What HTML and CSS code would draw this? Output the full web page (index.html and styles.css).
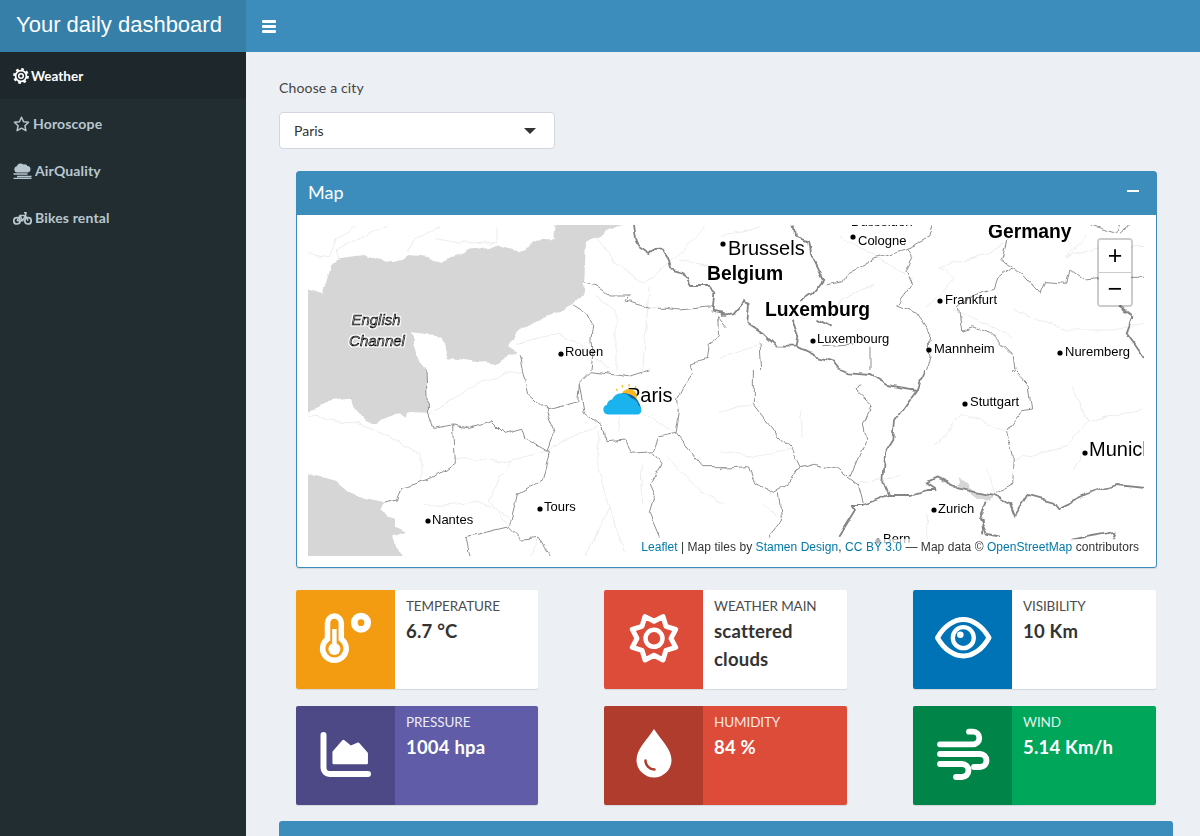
FILE: index.html
```html
<!DOCTYPE html>
<html lang="en">

<head>
    <meta charset="UTF-8">
    <meta name="viewport" content="width=device-width, initial-scale=1.0">
    <title>Your daily dashboard</title>
    <link rel="stylesheet" href="styles.css">
</head>

<body>
    <header class="topbar">
        <div class="logo">Your daily dashboard</div>
        <div class="navbar">
            <span class="burger"><i></i><i></i><i></i></span>
        </div>
    </header>

    <div class="page">
        <aside class="sidebar">
            <a class="nav-item active">
                <svg class="nav-icon" viewBox="0 0 16 16">
                    <circle class="line" cx="8" cy="8" r="5.4" stroke-width="1.8" />
                    <circle class="teeth" cx="8" cy="8" r="6.8" stroke-width="2.2" stroke-dasharray="2.7 2.64" />
                    <circle class="line" cx="8" cy="8" r="2.3" stroke-width="1.5" />
                </svg>
                Weather
            </a>
            <a class="nav-item">
                <svg class="nav-icon wide" viewBox="0 0 17 16">
                    <polygon class="line" stroke-width="1.5" stroke-linejoin="round"
                        points="8.5,1.2 10.6,5.7 15.6,6.3 11.9,9.7 12.9,14.7 8.5,12.2 4.1,14.7 5.1,9.7 1.4,6.3 6.4,5.7" />
                </svg>
                Horoscope
            </a>
            <a class="nav-item">
                <svg class="nav-icon wider" viewBox="0 0 19 16">
                    <path class="solid" d="M4 9.5a3.2 3.2 0 0 1-.2-6.3 4 4 0 0 1 6.6-1.6 3 3 0 0 1 4 1.4 3.3 3.3 0 0 1 .6 6.5z" />
                    <path class="line" stroke-width="1.3" d="M0.5 11h14M4 13.5h14.5M0.5 15.5h18" />
                </svg>
                AirQuality
            </a>
            <a class="nav-item">
                <svg class="nav-icon wider" viewBox="0 0 19 16">
                    <circle class="line" cx="4" cy="10.8" r="3.2" stroke-width="1.7" />
                    <circle class="line" cx="15" cy="10.8" r="3.2" stroke-width="1.7" />
                    <path class="line" stroke-width="1.5" d="M4 10.8 7 5.5h5.5L15 10.8M7 5.5l2.5 5.3h-5.500M12.500 5.500l-3 5.300M11 2.800h2l-.5 2.700" />
                </svg>
                Bikes rental
            </a>
        </aside>

        <main class="content">
            <label class="field-label">Choose a city</label>
            <div class="select">
                <span>Paris</span>
                <span class="caret"></span>
            </div>

            <div class="inner">
                <section class="box">
                    <div class="box-header">
                        <h3>Map</h3>
                        <span class="collapse"></span>
                    </div>
                    <div class="box-body">
                        <div class="map">
                            <svg class="tiles" viewBox="308 225 836 331">
                                <defs>
                                    <filter id="rough" x="0" y="0" width="100%" height="100%" color-interpolation-filters="sRGB">
                                        <feTurbulence type="fractalNoise" baseFrequency="0.07" numOctaves="2" seed="4" />
                                        <feDisplacementMap in="SourceGraphic" scale="7" xChannelSelector="R" yChannelSelector="G" />
                                    </filter>
                                    <filter id="halo" x="-10%" y="-20%" width="120%" height="140%">
                                        <feMorphology in="SourceAlpha" operator="dilate" radius="1" />
                                        <feComponentTransfer result="edge">
                                            <feFuncR type="linear" slope="0" intercept="1" />
                                            <feFuncG type="linear" slope="0" intercept="1" />
                                            <feFuncB type="linear" slope="0" intercept="1" />
                                        </feComponentTransfer>
                                        <feMerge>
                                            <feMergeNode in="edge" />
                                            <feMergeNode in="SourceGraphic" />
                                        </feMerge>
                                    </filter>
                                </defs>

                                <g filter="url(#rough)">
                                    <g transform="translate(296 170) scale(.3333)">
                                        <path class="sea" d="M780,150 L1005,150 L930,185 L870,215 L865,330 L860,370 L830,405 L780,430 L720,455 L660,490 L640,530 L665,545 L600,585 L540,575 L470,565 L455,570 L440,500 L345,490 L385,610 L20,610 L20,350 L80,370 L105,290 L130,265 L200,255 L260,275 L320,270 L340,255 L400,262 L440,282 L470,260 L510,248 L530,235 L600,225 L665,245 L700,225 L740,205 L775,205 Z" />
                                        <path class="minor" d="M36,250 L100,260 L120,210 L180,170 M130,270 L120,240 L230,180 L280,170 M340,250 L350,215 L430,170 M415,205 L490,220 L600,215 L600,170 M900,200 L960,280 L1050,340 L1140,260 L1230,170 M1060,350 L1040,600 M900,380 L960,420 L960,600 M660,520 L790,490 L860,530 L940,600 M1150,270 L1250,290" />
                                        <path class="region" d="M865,335 L900,345 L940,375 L1000,375 L990,390 L1040,405 L1060,415 L1110,415 L1150,420 L1250,410 M835,408 L870,430 L890,470 L885,510 L890,560 L885,600 M670,550 L680,600 M1290,470 L1265,440 L1268,500 L1240,520 L1235,565 L1180,580 L1185,600" />
                                        <path class="border" d="M1010,160 L1018,205 L1030,235 L1060,255 L1075,240 L1100,238 L1115,260 L1125,295 L1160,305 L1185,345 L1235,345 L1255,365 L1250,425 L1290,435" />
                                    </g>
                                    <g transform="translate(720 170) scale(.3333)">
                                        <path class="minor" d="M0,200 L120,170 M360,200 L470,260 L580,330 M660,290 L800,250 L860,215 M620,410 L700,330 L660,290 M880,170 L860,215 M1040,260 L1140,230 L1270,230 M880,420 L1040,480 L1180,480 L1270,460 M470,340 L360,390 L330,450 M0,560 L130,520 M700,420 L880,500 M1100,200 L1040,260" />
                                        <path class="region" d="M640,160 L630,200 L585,225 L560,235 L575,260 L555,300 L575,345 L530,405 L590,430 L630,490 L625,525 L630,560 L620,600 M315,345 L370,335 L380,310 L460,265 L560,235 M860,215 L845,265 L875,290 L910,315 L960,370 L975,335 L1040,340 L1050,300 L1090,330 L1150,325 L1290,325 M875,290 L830,325 L820,355 L760,375 L715,410 L725,480 L760,470 L810,490 L850,530 L880,560 L885,600 M1115,165 L1190,190 L1200,160 M1200,190 L1235,160 M120,520 L125,600 M450,530 L450,600 M310,530 L400,525" />
                                        <path class="border" d="M220,160 L225,200 L265,215 L270,250 L290,290 L310,330 L280,370 L240,395 M0,435 L40,430 L75,390 L90,400 L85,460 L130,490 L170,530 L230,530 L290,560 L340,575 L360,600 M215,445 L235,500 L230,530 M290,445 L335,470 M1200,410 L1240,440 L1220,490 L1290,590" />
                                    </g>
                                    <g transform="translate(296 370) scale(.3333)">
                                        <path class="sea" d="M20,-5 L390,-5 L395,130 L420,130 L330,125 L325,145 L310,130 L230,160 L200,145 L160,85 L100,95 L60,115 L20,130 Z" />
                                        <path class="sea" d="M20,305 L60,320 L120,335 L155,365 L210,385 L260,395 L250,425 L300,440 L300,470 L330,485 L290,500 L300,530 L330,570 L20,570 Z" />
                                        <path class="minor" d="M36,135 L200,165 L300,210 L375,255 L375,340 M470,265 L640,275 L750,240 L900,170 M640,275 L580,390 L640,470 M380,410 L560,395 L640,440 M910,180 L905,290 L940,420 L990,550 M1040,130 L1140,190 M970,140 L965,190 M1110,260 L1220,370 L1290,400 M680,0 L560,30 L500,70 L395,130 M730,505 L700,557 M940,415 L870,557 M1035,280 L1040,400" />
                                        <path class="region" d="M390,0 L395,130 L415,175 L470,165 L475,280 L420,320 L320,355 L305,390 L260,400 M470,165 L520,175 L590,155 L625,190 L680,175 L690,205 L750,240 L760,240 L750,290 L740,330 L665,370 L640,470 L510,500 L525,570 M680,0 L695,70 L750,120 L845,95 L850,40 L885,5 L1000,20 L1060,0 M750,120 L775,180 L750,240 M850,40 L865,130 L925,180 L930,215 L990,210 L1005,250 L1070,245 L1090,200 L1140,190 L1150,130 L1145,90 L1170,40 L1190,10 M1070,245 L1095,280 L1060,345 L1075,380 L1060,430 L1090,500 M1140,190 L1220,290 L1290,290 M640,470 L680,510 L730,505 L770,570" />
                                    </g>
                                    <g transform="translate(720 370) scale(.3333)">
                                        <path class="sea" d="M715,320 L760,360 L820,375 L810,395 L770,380 L735,355 L705,355 L720,335 Z" />
                                        <path class="minor" d="M0,240 L100,260 L215,240 M240,120 L250,200 M650,230 L720,130 L800,160 L860,185 M880,270 L1040,230 L1100,150 L1060,50 M1100,150 L1270,120 M1060,300 L1090,240 M820,370 L800,300 M420,340 L540,320 M130,400 L180,450 M620,430 L620,510 M0,130 L100,100" />
                                        <path class="region" d="M100,0 L100,100 L170,190 L215,240 L240,290 L210,340 L160,370 L105,340 L85,290 L0,295 M240,290 L280,280 L350,295 L415,345 L430,400 M420,40 L405,60 L455,105 L430,165 L440,205 L390,320 M880,0 L925,50 L935,120 L905,125 L860,185 L880,260 L875,345 L825,370 M175,370 L185,450 L150,500" />
                                        <path class="border" d="M360,0 L385,10 L450,15 L500,45 L590,60 L560,100 L525,150 L520,210 L495,250 L490,340 L505,375 L430,405 L395,405 L405,420 L355,500 M610,0 L590,60 M505,375 L570,375 L620,360 L650,360 L620,340 L650,325 L700,350 L820,375 L870,400 L885,440 L925,375 L1000,395 L1015,415 L1100,375 L1190,345 L1290,355 M800,395 L780,450 L800,490 L840,500 M785,450 L790,490 M1050,510 L1190,485 L1180,510" />
                                    </g>
                                </g>

                                <g class="dots">
                                    <circle cx="723" cy="244" r="2.6" />
                                    <circle cx="853" cy="237" r="2.6" />
                                    <circle cx="940" cy="301" r="2.6" />
                                    <circle cx="813" cy="341" r="2.6" />
                                    <circle cx="929" cy="350" r="2.6" />
                                    <circle cx="1060" cy="353" r="2.6" />
                                    <circle cx="561" cy="354" r="2.6" />
                                    <circle cx="965" cy="404" r="2.6" />
                                    <circle cx="1085" cy="453" r="2.6" />
                                    <circle cx="934" cy="510" r="2.6" />
                                    <circle cx="540" cy="509" r="2.6" />
                                    <circle cx="428" cy="521" r="2.6" />
                                    <circle cx="878" cy="541" r="2.6" />
                                </g>
                                <g class="labels">
                                    <text class="big" x="728" y="255">Brussels</text>
                                    <text class="country" x="707" y="280">Belgium</text>
                                    <text class="country" x="765" y="316">Luxemburg</text>
                                    <text class="country" x="988" y="238">Germany</text>
                                    <text x="851" y="226">Düsseldorf</text>
                                    <text x="858" y="245">Cologne</text>
                                    <text x="945" y="304">Frankfurt</text>
                                    <text x="817" y="343">Luxembourg</text>
                                    <text x="934" y="353">Mannheim</text>
                                    <text x="1065" y="356">Nuremberg</text>
                                    <text x="565" y="356">Rouen</text>
                                    <text x="970" y="406">Stuttgart</text>
                                    <text class="big" x="1089" y="456">Munich</text>
                                    <text x="938" y="513">Zurich</text>
                                    <text x="883" y="543">Bern</text>
                                    <text x="544" y="511">Tours</text>
                                    <text x="432" y="524">Nantes</text>
                                    <text class="big" x="627" y="402">Paris</text>
                                    <text class="water" filter="url(#halo)" x="376" y="325">English</text>
                                    <text class="water" filter="url(#halo)" x="377" y="346">Channel</text>
                                </g>

                                <!-- weather marker -->
                                <g>
                                    <path class="ray" d="M616 389l1.500 1.500M622 385l.8 2.500M629 384v2.500M636 386l-1 2" />
                                    <circle cx="629" cy="397" r="8" fill="#fbb91f" />
                                    <path d="M622 393q15 0 19 15L630 401z" fill="#12679f" />
                                    <path d="M608 414.500A5 5 0 0 1 607 404.700 6 6 0 0 1 612 399.500 11 11 0 0 1 631 398Q638 400 638.500 405.500A4.800 4.800 0 0 1 638 414.500z" fill="#1ab3ee" />
                                </g>
                            </svg>

                            <div class="zoom-ctrl">
                                <span>+</span>
                                <span>−</span>
                            </div>
                            <div class="attribution">
                                <a>Leaflet</a> | Map tiles by <a>Stamen Design</a>, <a>CC BY 3.0</a> — Map data © <a>OpenStreetMap</a> contributors
                            </div>
                        </div>
                    </div>
                </section>

                <div class="info-grid">
                    <div class="info-box">
                        <div class="info-icon orange">
                            <svg viewBox="0 0 99 99">
                                <path class="stroke" stroke-width="5.500" d="M31.500 49V33a6.900 6.900 0 0 1 13.800 0V49a11.800 11.800 0 1 1-13.800 0z" />
                                <circle class="fill" cx="38.400" cy="59" r="6" />
                                <path class="stroke" stroke-width="4.500" d="M38.400 39V58" />
                                <circle class="stroke" cx="65" cy="32.700" r="6.700" stroke-width="6.700" />
                            </svg>
                        </div>
                        <div class="info-text">
                            <span class="info-label">TEMPERATURE</span>
                            <span class="info-value">6.7 °C</span>
                        </div>
                    </div>
                    <div class="info-box">
                        <div class="info-icon red">
                            <svg viewBox="0 0 99 99">
                                <polygon class="stroke" stroke-width="5" stroke-linejoin="round" transform="translate(50 48.300)"
                                    points="0,-17 9,-21.700 12,-12 21.700,-9 17,0 21.700,9 12,12 9,21.700 0,17 -9,21.700 -12,12 -21.700,9 -17,0 -21.700,-9 -12,-12 -9,-21.700" />
                                <circle class="stroke" cx="50" cy="48.300" r="8.500" stroke-width="4.500" />
                            </svg>
                        </div>
                        <div class="info-text">
                            <span class="info-label">WEATHER MAIN</span>
                            <span class="info-value">scattered clouds</span>
                        </div>
                    </div>
                    <div class="info-box">
                        <div class="info-icon blue">
                            <svg viewBox="0 0 99 99">
                                <path class="stroke" stroke-width="5" stroke-linejoin="round" d="M24.500 47.700C31 36 41 29.500 50.300 29.500S69.500 36 76 47.700C69.500 59.500 59.500 66 50.300 66S31 59.500 24.500 47.700z" />
                                <circle class="stroke" cx="50.300" cy="47.700" r="10.500" stroke-width="4.300" />
                                <circle class="fill" cx="47.300" cy="44.700" r="3.300" />
                            </svg>
                        </div>
                        <div class="info-text">
                            <span class="info-label">VISIBILITY</span>
                            <span class="info-value">10 Km</span>
                        </div>
                    </div>
                    <div class="info-box purple">
                        <div class="info-icon">
                            <svg viewBox="0 0 99 99">
                                <path class="stroke" stroke-width="6" stroke-linecap="round" d="M27.500 29V62a6 6 0 0 0 6 6H72" />
                                <path class="fill solid-join" d="M37.700 57V46L47.300 35 54.700 41 62.300 37.700 70.700 47.300V57z" />
                            </svg>
                        </div>
                        <div class="info-text">
                            <span class="info-label">PRESSURE</span>
                            <span class="info-value">1004 hpa</span>
                        </div>
                    </div>
                    <div class="info-box coral">
                        <div class="info-icon">
                            <svg viewBox="0 0 99 99">
                                <path class="fill" d="M50 23C57 34 67.500 43 67.500 54a17.500 17.500 0 0 1-35 0C32.500 43 43 34 50 23z" />
                                <path class="glint" d="M41.500 54.500c0 5 4 9 9 9" />
                            </svg>
                        </div>
                        <div class="info-text">
                            <span class="info-label">HUMIDITY</span>
                            <span class="info-value">84 %</span>
                        </div>
                    </div>
                    <div class="info-box green">
                        <div class="info-icon">
                            <svg viewBox="0 0 99 99">
                                <path class="stroke" stroke-width="5.800" stroke-linecap="round" d="M27 38.300H60a6.300 6.300 0 0 0 0-12.600h-4M27 48H67a6.500 6.500 0 0 1 0 13h-6M27 58H49a6.500 6.500 0 0 1 0 13h-6" />
                            </svg>
                        </div>
                        <div class="info-text">
                            <span class="info-label">WIND</span>
                            <span class="info-value">5.14 Km/h</span>
                        </div>
                    </div>
                </div>
            </div>

            <section class="box-next">
                <h3>Weather forecast</h3>
            </section>
        </main>
    </div>
</body>

</html>
```

FILE: styles.css
```css
html,
body {
    height: 100%;
}

body {
    margin: 0;
    overflow: hidden;
    background-color: #ecf0f5;
    color: #333;
    font-family: Lato, "Noto Sans", sans-serif;
    font-size: 14px;
}

.topbar {
    display: flex;
    height: 52px;
}

.logo {
    width: 246px;
    padding-left: 16px;
    box-sizing: border-box;
    background-color: #367fa9;
    color: #fff;
    font-family: "Liberation Sans", Arial, sans-serif;
    font-size: 22px;
    line-height: 50px;
}

.navbar {
    flex: 1;
    display: flex;
    align-items: center;
    padding-left: 16px;
    background-color: #3c8dbc;
}

.burger {
    display: flex;
    flex-direction: column;
    gap: 2px;
    width: 14px;
}

.burger i {
    height: 3px;
    border-radius: 1px;
    background-color: #fff;
}

.page {
    display: flex;
    height: 784px;
}

/* sidebar */
.sidebar {
    width: 246px;
    flex-shrink: 0;
    background-color: #222d32;
}

.nav-item {
    display: flex;
    align-items: center;
    gap: 3px;
    height: 47px;
    padding: 2px 0 0 13px;
    box-sizing: border-box;
    color: #b8c7ce;
    font-weight: 700;
    font-size: 14px;
    letter-spacing: .15px;
}

.nav-item.active {
    gap: 2px;
    padding-top: 1px;
    background-color: #1e282c;
    color: #fff;
    font-size: 13.500px;
    letter-spacing: 0;
}

.nav-icon {
    width: 16px;
    height: 16px;
}

.nav-icon.wide {
    width: 17px;
}

.nav-icon.wider {
    width: 19px;
}

.line {
    fill: none;
    stroke: currentColor;
}

.teeth {
    fill: none;
    stroke: currentColor;
}

.solid {
    fill: currentColor;
}

/* main area */
.content {
    flex: 1;
    padding: 27px 27px 0 33px;
}

.field-label {
    display: block;
    height: 33px;
    line-height: 18px;
    color: #444;
    letter-spacing: .15px;
}

.select {
    display: flex;
    justify-content: space-between;
    align-items: center;
    width: 276px;
    height: 37px;
    box-sizing: border-box;
    padding: 0 18px 0 14px;
    border: 1px solid #d2d6de;
    border-radius: 4px;
    background-color: #fff;
}

.caret {
    width: 0;
    height: 0;
    border-left: 6px solid transparent;
    border-right: 6px solid transparent;
    border-top: 6px solid #333;
}

.inner {
    padding: 22px 16px 0 17px;
}

/* map box */
.box {
    border: 1px solid #3c8dbc;
    border-radius: 3px;
    background-color: #fff;
    box-shadow: 0 1px 1px rgba(0, 0, 0, .1);
}

.box-header {
    display: flex;
    justify-content: space-between;
    align-items: center;
    height: 43px;
    padding: 0 17px 3px 11px;
    box-sizing: border-box;
    background-color: #3c8dbc;
    color: #fff;
}

.box-header h3 {
    margin: 0;
    font-size: 18px;
    font-weight: 400;
}

.collapse {
    width: 12px;
    height: 2px;
    margin-bottom: 2px;
    background-color: #fff;
}

.box-body {
    padding: 10px 12px 11px 11px;
}

.map {
    position: relative;
    height: 331px;
    overflow: hidden;
}

.tiles {
    display: block;
    width: 836px;
    height: 331px;
    background-color: #fff;
}

.sea {
    fill: #d6d6d6;
}

.minor,
.region,
.border {
    fill: none;
    vector-effect: non-scaling-stroke;
    stroke-linejoin: round;
}

.minor {
    stroke: #ececec;
    stroke-width: 1;
}

.region {
    stroke: #8f8f8f;
    stroke-width: 1;
}

.border {
    stroke: #858585;
    stroke-width: 1.800;
}

.dots {
    fill: #000;
}

.labels text {
    font-family: "Liberation Sans", Arial, sans-serif;
    font-size: 13px;
    fill: #000;
}

.labels .big {
    font-size: 20px;
}

.labels .country {
    font-size: 19.300px;
    font-weight: 700;
}

.labels .water {
    font-size: 15px;
    font-style: italic;
    text-anchor: middle;
    fill: #fff;
    stroke: #000;
    stroke-width: .9px;
}

.ray {
    fill: none;
    stroke: #fbb91f;
    stroke-width: 1.200;
}

.zoom-ctrl {
    position: absolute;
    top: 13px;
    right: 11px;
    display: flex;
    flex-direction: column;
    border: 2px solid rgba(0, 0, 0, .2);
    border-radius: 4px;
    background-clip: padding-box;
}

.zoom-ctrl span {
    width: 32px;
    height: 32px;
    background-color: #fff;
    color: #000;
    font-family: "Liberation Sans", Arial, sans-serif;
    font-size: 25px;
    line-height: 31px;
    text-align: center;
}

.zoom-ctrl span:first-child {
    border-bottom: 1px solid #ccc;
    border-radius: 2px 2px 0 0;
}

.zoom-ctrl span:last-child {
    border-radius: 0 0 2px 2px;
}

.attribution {
    position: absolute;
    right: 0;
    bottom: 1px;
    padding: 0 5px;
    background-color: rgba(255, 255, 255, .7);
    color: #333;
    font-family: "Liberation Sans", Arial, sans-serif;
    font-size: 12px;
    letter-spacing: .05px;
    line-height: 16px;
}

.attribution a {
    color: #0078a8;
}

/* info boxes */
.info-grid {
    display: grid;
    grid-template-columns: 242px 243px 243px;
    justify-content: space-between;
    grid-auto-rows: 99px;
    row-gap: 17px;
    margin-top: 22px;
    padding-right: 1px;
}

.info-box {
    display: flex;
    border-radius: 2px;
    background-color: #fff;
    box-shadow: 0 1px 1px rgba(0, 0, 0, .1);
    overflow: hidden;
}

.info-icon {
    width: 99px;
    flex-shrink: 0;
    background-color: rgba(0, 0, 0, .2);
}

.info-icon svg {
    display: block;
    width: 99px;
    height: 99px;
}

.info-icon .stroke {
    fill: none;
    stroke: #fff;
}

.info-icon .fill {
    fill: #fff;
}

.solid-join {
    stroke: #fff;
    stroke-width: 2.500;
    stroke-linejoin: round;
}

.glint {
    fill: none;
    stroke: #b03a2a;
    stroke-width: 2.500;
    stroke-linecap: round;
}

.orange {
    background-color: #f39c12;
}

.red {
    background-color: #dd4b39;
}

.blue {
    background-color: #0073b7;
}

.purple {
    background-color: #605ca8;
    color: #fff;
}

.coral {
    background-color: #dd4b39;
    color: #fff;
}

.green {
    background-color: #00a65a;
    color: #fff;
}

.info-text {
    flex: 1;
    padding: 5px 10px 0 11px;
}

.info-label {
    display: block;
    font-size: 13.500px;
    letter-spacing: -.1px;
    line-height: 22px;
    opacity: .88;
}

.info-value {
    display: block;
    font-size: 18.500px;
    font-weight: 700;
    letter-spacing: .2px;
    line-height: 28px;
}

/* next box, cut off by the window */
.box-next {
    height: 60px;
    margin-top: 16px;
    padding-left: 24px;
    border-radius: 3px 3px 0 0;
    background-color: #3c8dbc;
    color: #fff;
}

.box-next h3 {
    margin: 0;
    padding-top: 11px;
    font-size: 18px;
    font-weight: 400;
}
```
